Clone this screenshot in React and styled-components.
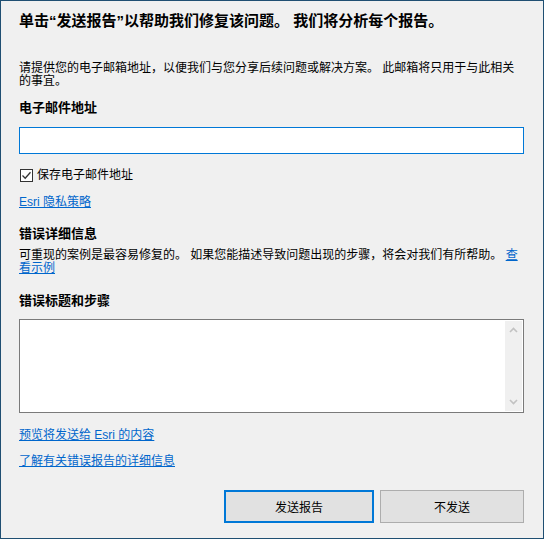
import React from "react";
import styled, { createGlobalStyle } from "styled-components";

const GlobalStyle = createGlobalStyle`
  html, body {
    margin: 0;
    padding: 0;
    background: #f0f0f0;
  }
  body {
    font-family: "Liberation Sans", "Noto Sans CJK SC", sans-serif;
    color: #000;
  }
`;

const Window = styled.div`
  width: 544px;
  height: 539px;
  box-sizing: border-box;
  border: 1px solid #1f4f72;
  background: #f0f0f0;
  padding: 11px 19px 0 18px;
  display: flex;
  flex-direction: column;
`;

const Title = styled.h1`
  margin: 0;
  font-size: 15px;
  line-height: 18px;
  font-weight: 700;
  white-space: nowrap;
`;

const Para = styled.p`
  margin: ${({ $top }) => $top}px 0 0;
  font-size: 12px;
  line-height: 13px;
`;

const Heading = styled.h2`
  margin: ${({ $top }) => $top}px 0 0;
  font-size: 13px;
  line-height: 16px;
  font-weight: 700;
`;

const EmailInput = styled.input`
  margin-top: 11px;
  height: 27px;
  box-sizing: border-box;
  border: 1px solid #0078d7;
  background: #fff;
  outline: none;
  padding: 0 4px;
  font: inherit;
  font-size: 12px;
`;

const CheckRow = styled.label`
  margin-top: 13px;
  display: flex;
  align-items: center;
  gap: 4px;
  height: 16px;
  font-size: 12px;
  line-height: 16px;
  margin-left: 1px;
`;

const Box = styled.span`
  width: 13px;
  height: 13px;
  box-sizing: border-box;
  border: 1px solid #333;
  background: #fff;
  display: flex;
  align-items: center;
  justify-content: center;
`;

const LinkLine = styled.div`
  margin-top: ${({ $top }) => $top}px;
  font-size: 12px;
  line-height: 16px;
`;

const Link = styled.a`
  color: #0066cc;
  text-decoration: underline;
  cursor: pointer;
`;

const TextBox = styled.div`
  margin-top: 10px;
  height: 94px;
  box-sizing: border-box;
  border: 1px solid #7a7a7a;
  background: #fff;
  display: flex;
`;

const Area = styled.textarea`
  flex: 1;
  border: none;
  outline: none;
  resize: none;
  background: transparent;
  font: inherit;
  font-size: 12px;
  padding: 2px 4px;
`;

const ScrollTrack = styled.div`
  width: 17px;
  margin: 1px 1px 1px 0;
  background: #f0f0f0;
  display: flex;
  flex-direction: column;
  justify-content: space-between;
  align-items: center;
  padding: 6px 0;
  box-sizing: border-box;
`;

const Footer = styled.div`
  margin-top: 21px;
  display: flex;
  justify-content: flex-end;
  gap: 6px;
`;

const Button = styled.button`
  width: ${({ $w }) => $w}px;
  height: 33px;
  box-sizing: border-box;
  background: #e1e1e1;
  border: ${({ $primary }) => ($primary ? "2px solid #0078d7" : "1px solid #adadad")};
  font-family: "Liberation Sans", "Noto Sans CJK SC", sans-serif;
  font-size: 12px;
  color: #000;
  padding: 0;
  cursor: pointer;
`;

const Chevron = ({ down }) => (
  <svg width="9" height="6" viewBox="0 0 9 6">
    <path
      d={down ? "M1 1 L4.5 4.5 L8 1" : "M1 5 L4.5 1.5 L8 5"}
      fill="none"
      stroke="#c2c2c2"
      strokeWidth="1.6"
    />
  </svg>
);

const App = () => {
  return (
    <>
      <GlobalStyle />
      <Window>
        <Title>单击“发送报告”以帮助我们修复该问题。 我们将分析每个报告。</Title>
        <Para $top={32}>
          请提供您的电子邮箱地址，以便我们与您分享后续问题或解决方案。 此邮箱将只用于与此相关的事宜。
        </Para>
        <Heading $top={12}>电子邮件地址</Heading>
        <EmailInput type="text" />
        <CheckRow>
          <Box>
            <svg width="11" height="11" viewBox="0 0 11 11">
              <path d="M1.5 5.5 L4.2 8.2 L9.5 2.2" fill="none" stroke="#333" strokeWidth="1.3" />
            </svg>
          </Box>
          保存电子邮件地址
        </CheckRow>
        <LinkLine $top={11}>
          <Link>Esri 隐私策略</Link>
        </LinkLine>
        <Heading $top={16}>错误详细信息</Heading>
        <Para $top={7}>
          可重现的案例是最容易修复的。 如果您能描述导致问题出现的步骤，将会对我们有所帮助。 <Link>查看示例</Link>
        </Para>
        <Heading $top={18}>错误标题和步骤</Heading>
        <TextBox>
          <Area />
          <ScrollTrack>
            <Chevron />
            <Chevron down />
          </ScrollTrack>
        </TextBox>
        <LinkLine $top={14}>
          <Link>预览将发送给 Esri 的内容</Link>
        </LinkLine>
        <LinkLine $top={10}>
          <Link>了解有关错误报告的详细信息</Link>
        </LinkLine>
        <Footer>
          <Button $primary $w={150}>发送报告</Button>
          <Button $w={144}>不发送</Button>
        </Footer>
      </Window>
    </>
  );
};

export default App;
